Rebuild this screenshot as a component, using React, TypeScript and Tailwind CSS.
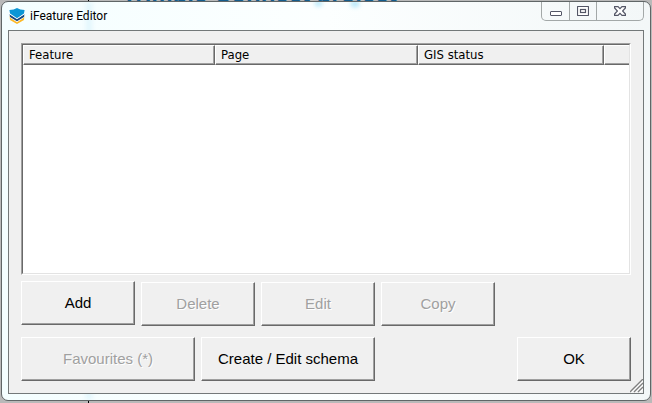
import React from 'react';

type Column = { name: string; width: string };

const columns: Column[] = [
  { name: 'Feature', width: 'w-[192px]' },
  { name: 'Page', width: 'w-[203px]' },
  { name: 'GIS status', width: 'w-[186px]' },
  { name: '', width: 'w-auto' },
];

interface ClassicButtonProps {
  label: string;
  disabled?: boolean;
  wide?: boolean;
}

function ClassicButton({ label, disabled, wide }: ClassicButtonProps) {
  return (
    <button
      type="button"
      disabled={disabled}
      className={`h-11 border border-t-white border-l-white border-r-[#696969] border-b-[#696969] bg-[#f0f0f0] text-[15px] text-black shadow-[inset_-1px_-1px_0_#a0a0a0] disabled:text-[#a0a0a0] disabled:[text-shadow:1px_1px_0_#fff] ${
        wide ? 'w-[174px]' : 'w-[114px]'
      }`}
    >
      {label}
    </button>
  );
}

function AppIcon() {
  return (
    <svg width="16" height="16" viewBox="0 0 16 16" aria-hidden="true">
      <path d="M.6 8 8 13.4 15.4 8 15 12 8 16 1 12Z" fill="#fdb825" />
      <path d="M.2 6 8 10 15.8 6 15.2 9.6 8 14.2.8 9.6Z" fill="#fff" />
      <path d="M.5 6 8 10.6 15.5 6 15 9 8 13.2 1 9Z" fill="#17477e" />
      <path d="M0 2Q5 2 8 0 11 2 16 2L15.6 6.2 8 11.2.4 6.2Z" fill="#fff" />
      <path d="M.4 2Q5 2 8 0 11 2 15.6 2L15 5.6 8 10.2 1 5.6Z" fill="#0c96d5" />
    </svg>
  );
}

function WindowControls() {
  return (
    <div className="mr-[6px] flex h-[19px] rounded-b-[5px] border border-t-0 border-[#a3a8a8]">
      <button type="button" aria-label="Minimize" className="flex w-7 items-center justify-center border-r border-[#a3a8a8]">
        <svg width="12" height="14" viewBox="0 0 12 14">
          <rect x="0.5" y="7.5" width="11" height="4" rx="0.5" fill="#fff" stroke="#535666" />
        </svg>
      </button>
      <button type="button" aria-label="Maximize" className="flex w-[27px] items-center justify-center border-r border-[#a3a8a8]">
        <svg width="12" height="10" viewBox="0 0 12 10">
          <rect x="0.5" y="0.5" width="11" height="9" rx="0.5" fill="#fff" stroke="#535666" strokeWidth="1.2" />
          <rect x="3.5" y="3.5" width="5" height="3" fill="#fff" stroke="#535666" strokeWidth="1.2" />
        </svg>
      </button>
      <button type="button" aria-label="Close" className="flex w-[46px] items-center justify-center">
        <svg width="12" height="10" viewBox="0 0 12 10">
          <path
            d="M.6.6H4L6 2.7 8 .6H11.4V1.9L8.6 5 11.4 8.1V9.4H8L6 7.3 4 9.4H.6V8.1L3.4 5 .6 1.9Z"
            fill="#fff"
            stroke="#535666"
            strokeWidth="1.2"
          />
        </svg>
      </button>
    </div>
  );
}

export default function App() {
  return (
    <div className="relative flex h-screen flex-col overflow-hidden bg-[#b9b9b9] px-px pt-px pb-0.5 font-['Liberation_Sans',sans-serif]">
      {/* Page behind the dialog */}
      <div className="absolute top-0 bottom-0 left-[88px] w-px bg-black" />
      <div className="absolute top-[-20px] left-[122px] text-[24px] leading-[28px] font-bold whitespace-nowrap text-[#145c8c]">
        Trimble Connect project
      </div>

      <main className="relative flex min-h-0 flex-1 flex-col overflow-hidden rounded-[7px] border border-[#606667] bg-linear-to-r from-[#f4feff] via-[#fcffff] to-[#f3f7f8]">
        {/* Shapes showing through the glass frame */}
        <div className="absolute top-0 bottom-0 left-[84px] w-[6px] bg-[#e2f6fc] blur-[2px]" />
        <div className="absolute top-[-1px] left-[313px] h-[5px] w-[7px] bg-[#b5e8fa] blur-[2px]" />
        <div className="absolute top-[-1px] left-[349px] h-[6px] w-[8px] bg-[#b5e8fa] blur-[2px]" />

        <header className="relative flex h-7 shrink-0 items-start justify-between">
          <div className="flex h-7 items-center gap-[5px] pl-[7px]">
            <AppIcon />
            <h1 className="font-[Roboto,sans-serif] text-[12px] leading-4 text-black">iFeature Editor</h1>
          </div>
          <WindowControls />
        </header>

        <section className="relative mx-[6px] mb-[6px] flex min-h-0 flex-1 flex-col border border-[#737879] bg-[#f0f0f0] p-3">
          <div className="min-h-0 flex-1 border border-t-[#a0a0a0] border-r-white border-b-white border-l-[#a0a0a0] bg-white">
            <div className="h-full border border-t-[#696969] border-r-[#e3e3e3] border-b-[#e3e3e3] border-l-[#696969]">
              <table className="w-full table-fixed border-separate border-spacing-0 font-['DejaVu_Sans_Condensed','DejaVu_Sans',sans-serif] text-[13px]">
                <thead>
                  <tr>
                    {columns.map((col, i) => (
                      <th
                        key={i}
                        className={`h-5 border border-t-white border-r-[#696969] border-b-[#696969] border-l-white bg-[#f0f0f0] px-[5px] py-0 text-left leading-4 font-normal text-black shadow-[inset_-1px_-1px_0_#a0a0a0] last:border-r-0 last:shadow-[inset_0_-1px_0_#a0a0a0] ${col.width}`}
                      >
                        {col.name}
                      </th>
                    ))}
                  </tr>
                </thead>
                <tbody />
              </table>
            </div>
          </div>

          <div className="mt-[6px] flex items-start gap-[6px]">
            <ClassicButton label="Add" />
            <div className="flex gap-[6px] pt-px">
              <ClassicButton label="Delete" disabled />
              <ClassicButton label="Edit" disabled />
              <ClassicButton label="Copy" disabled />
            </div>
          </div>

          <div className="mt-[11px] flex gap-[6px]">
            <ClassicButton label="Favourites (*)" disabled wide />
            <ClassicButton label="Create / Edit schema" wide />
            <div className="ml-auto flex">
              <ClassicButton label="OK" />
            </div>
          </div>

          {/* Resize grip */}
          <svg className="absolute right-0 bottom-0" width="13" height="14" viewBox="0 0 13 14" aria-hidden="true">
            <path d="M1 13 13 1M5 13 13 5M9 13 13 9" stroke="#fff" strokeWidth="2.4" />
            <path d="M0 13 13 0M4 13 13 4M8 13 13 8" stroke="#808080" strokeWidth="1.4" />
          </svg>
        </section>
      </main>
    </div>
  );
}
